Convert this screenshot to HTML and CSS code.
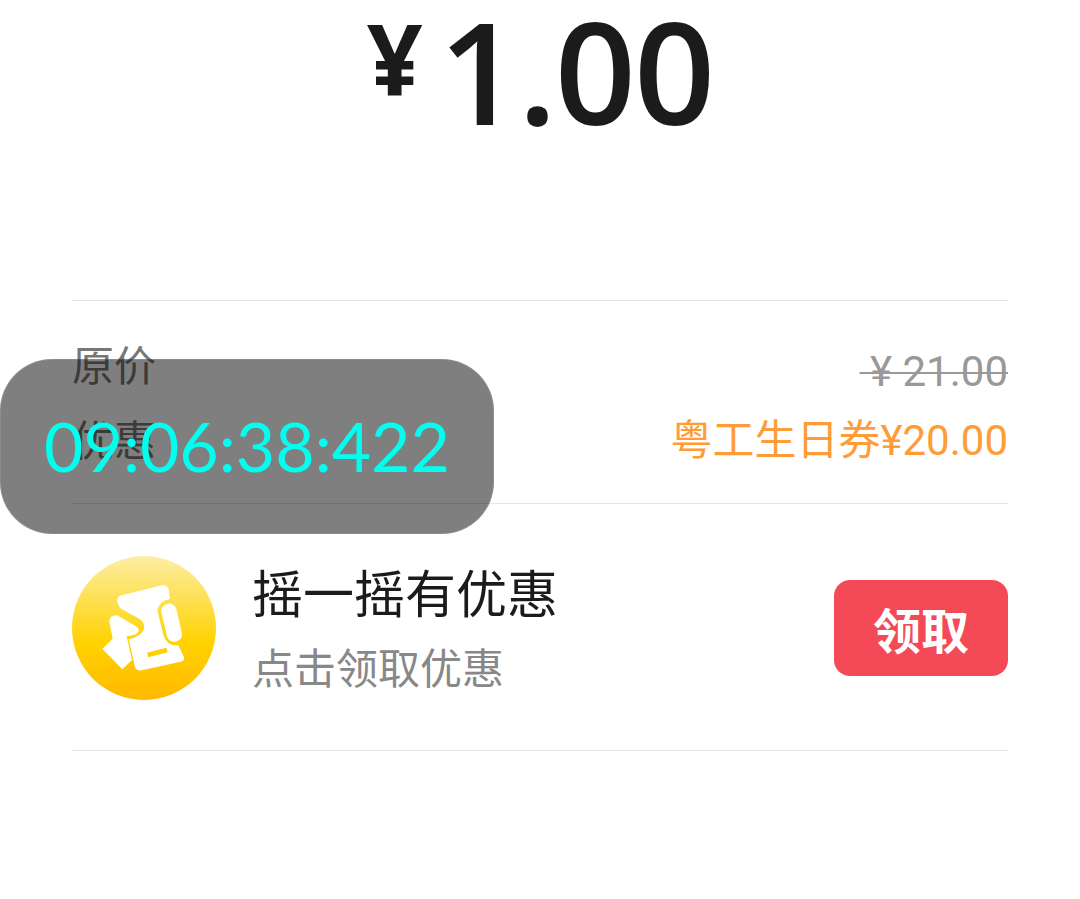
FILE: index.html
```html
<!DOCTYPE html>
<html lang="zh-CN">
<head>
    <meta charset="UTF-8">
    <meta name="viewport" content="width=device-width, initial-scale=1.0">
    <title>支付</title>
    <link rel="stylesheet" href="styles.css">
</head>
<body>
    <div class="container">
        <div class="amount">
            <span class="amount-unit">¥</span><span class="amount-value">1.00</span>
        </div>

        <div class="prices">
            <div class="price-labels">
                <div class="price-label">原价</div>
                <div class="price-label">优惠</div>
            </div>
            <div class="price-values">
                <div class="price-value"><span class="price-old">&nbsp;¥ 21.00</span></div>
                <div class="price-value price-off">粤工生日券¥20.00</div>
            </div>
        </div>

        <div class="promo">
            <svg class="promo-icon" viewBox="36 32 432 432">
                <defs>
                    <linearGradient id="coin" x1="0" y1="0" x2="0" y2="1">
                        <stop offset="0" stop-color="#fdeea6"/>
                        <stop offset="0.6" stop-color="#ffd200"/>
                        <stop offset="1" stop-color="#ffb900"/>
                    </linearGradient>
                </defs>
                <circle cx="252" cy="248" r="216" fill="url(#coin)"/>
                <path fill="#fff" d="M185 150 L305 120 Q322 117 326 133 L330 161 Q298 165 292 195 L310 268 Q320 302 355 300 L372 335 Q375 346 362 349 L245 375 Q228 378 224 362 L206 281 Q244 276 253 248 Q253 228 235 219 L184 191 Q172 180 172 165 Q172 153 185 150 Z"/>
                <path fill="#fff" d="M165 210 Q172 209 182 216 L228 243 Q238 250 236 258 Q232 268 218 270 L200 273 L216 344 L187 372 L127 310 L158 280 L148 228 Q149 212 165 210 Z"/>
                <rect x="312" y="174" width="46" height="116" rx="22" fill="#fff" transform="rotate(-13 335 232)"/>
                <path d="M263 329 L321 314" stroke="#ffcf00" stroke-width="14" fill="none"/>
            </svg>
            <div class="promo-text">
                <div class="promo-title">摇一摇有优惠</div>
                <div class="promo-sub">点击领取优惠</div>
            </div>
            <button class="promo-btn">领取</button>
        </div>
    </div>

    <div class="timer">09:06:38:422</div>
</body>
</html>
```

FILE: styles.css
```css
body {
    margin: 0;
    background-color: #fff;
    font-family: Roboto, "Noto Sans CJK SC", sans-serif;
    overflow: hidden;
}
.container {
    padding: 0 72px;
}
.amount {
    height: 300px;
    border-bottom: 1px solid #e5e5e5;
    display: flex;
    justify-content: center;
    align-items: flex-start;
    color: #1b1b1b;
    font-family: "Open Sans", sans-serif;
}
.amount-unit {
    font-size: 98px;
    font-weight: 700;
    line-height: 116px;
    margin-right: 16px;
}
.amount-value {
    font-size: 142px;
    font-weight: 600;
    line-height: 141px;
    letter-spacing: -2px;
}
.prices {
    height: 203px;
    border-bottom: 1px solid #e5e5e5;
    box-sizing: border-box;
    display: flex;
    justify-content: space-between;
    font-size: 42px;
}
.price-labels {
    padding-top: 28px;
    color: #777;
}
.price-label {
    height: 75px;
    line-height: 75px;
}
.price-values {
    padding-top: 36px;
    text-align: right;
}
.price-value {
    height: 69px;
    line-height: 69px;
}
.price-old {
    color: #999;
    text-decoration: line-through;
    text-decoration-thickness: 2px;
}
.price-off {
    color: #ff9c38;
}
.promo {
    height: 244px;
    padding-top: 2px;
    border-bottom: 1px solid #e5e5e5;
    display: flex;
    align-items: center;
}
.promo-icon {
    width: 144px;
    height: 144px;
    margin-right: 36px;
}
.promo-text {
    flex: 1;
    padding-top: 14px;
}
.promo-title {
    font-size: 51px;
    line-height: 70px;
    color: #1b1b1b;
}
.promo-sub {
    font-size: 42px;
    line-height: 78px;
    color: #888;
}
.promo-btn {
    width: 174px;
    height: 96px;
    border: none;
    border-radius: 16px;
    background-color: #f44a58;
    color: #fff;
    font-family: inherit;
    font-size: 48px;
    font-weight: 700;
}
.timer {
    position: absolute;
    left: 0;
    top: 359px;
    width: 494px;
    height: 175px;
    border-radius: 52px;
    background: rgba(0,0,0,0.5);
    box-shadow: inset 0 0 0 1px rgba(255,255,255,0.1);
    color: #00ffee;
    font-family: Lato, sans-serif;
    font-size: 68px;
    line-height: 174px;
    text-align: center;
}
```
